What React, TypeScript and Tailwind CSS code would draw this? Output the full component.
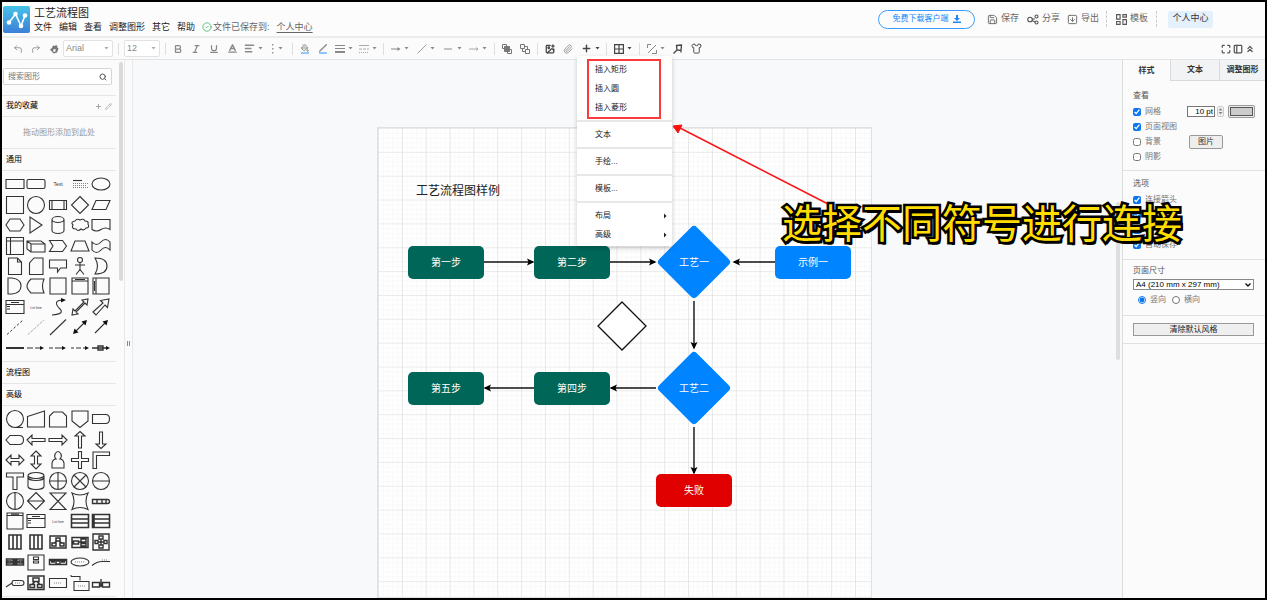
import { useState } from "react";
import type { ReactNode } from "react";
import { clsx } from "clsx";
import {
  AlignLeft,
  ArrowRight,
  Baseline,
  Bold,
  ChevronsUp,
  CircleCheck,
  CornerUpLeft,
  CornerUpRight,
  Grid2x2,
  ImagePlus,
  Italic,
  Maximize,
  Minus,
  PaintBucket,
  PanelLeft,
  Paperclip,
  Pencil,
  Plus,
  Save,
  Search,
  Shirt,
  Slash,
  SquareArrowDown,
  Underline,
} from "lucide-react";

type Shape = { d?: string; solid?: string; dash?: string; text?: string; width?: number };

const generalShapes: Shape[] = [
  { d: "M1 5.5h18v9H1z" },
  { d: "M2.5 5.5h15q1.5 0 1.5 1.5v6q0 1.5-1.5 1.5h-15Q1 14.5 1 13V7q0-1.5 1.5-1.5z" },
  { text: "Text" },
  { d: "M3 6.5h9", dash: "M3 9.5h15M3 11.5h14M3 13.5h15" },
  { d: "M1 10a9 6 0 1 0 18 0a9 6 0 1 0-18 0" },

  { d: "M1.5 1.5h17v17h-17z" },
  { d: "M1.5 10a8.5 8.5 0 1 0 17 0a8.5 8.5 0 1 0-17 0" },
  { d: "M1.5 5.5h17v9h-17zM4 5.5v9M16 5.5v9" },
  { d: "M10 1.5L18.5 10L10 18.5L1.5 10z" },
  { d: "M5 5.5h14l-4 9H1z" },

  { d: "M5 4h10l4 6-4 6H5l-4-6z" },
  { d: "M4 2v16l12-8z" },
  { d: "M4 4.5v11a6 3 0 0 0 12 0v-11a6 3 0 0 0-12 0a6 3 0 0 0 12 0" },
  { d: "M5 6Q7 3 10 5Q14 3 15 6Q19 6 18 9Q20 13 16 13Q14 16 11 14Q8 17 6 14Q1 14 3 10Q0 7 5 6z" },
  { d: "M1 4.5h18v10q-4.5-3-9 0t-9 0z" },

  { d: "M1.5 1.5h17v17h-17zM1.5 5h17M5.5 1.5v17" },
  { d: "M1 5h14l4 3v8H5l-4-3zM1 5l4 3h14M5 8v8" },
  { d: "M1.5 4.5h13l4 5.5-4 5.5h-13l3.5-5.5z" },
  { d: "M5 5h10l4 10H1z" },
  { d: "M1 6q4.5 5 9 0t9 0v8q-4.5-5-9 0t-9 0z" },

  { d: "M3.5 2h9l4 4v12.5h-13zM12.5 2v4h4" },
  { d: "M8 2h9v16.5H3.5V7z" },
  { d: "M1.5 4h17v8h-6l-3 4v-4h-8z" },
  { d: "M7.5 4a2.5 2.5 0 1 0 5 0a2.5 2.5 0 1 0-5 0M10 6.5v7M5 9h10M10 13.5l-4 5M10 13.5l4 5" },
  { d: "M4 2q12 0 12 8t-12 8q5-8 0-16z" },

  { d: "M3 2h4q9 1 9 8t-9 8H3z" },
  { d: "M5 3h13q-3 7 0 14H5Q1 13 1 10t4-7z" },
  { d: "M2 2h16v16H2z" },
  { d: "M2 2h16v16H2zM2 5h16M5 3.5h10" },
  { d: "M2 2h16v16H2zM5 2v16M3.5 5v10" },

  { d: "M1 3.5h18v13H1zM1 7.5h18M2 9.5h3M2 12h3M6 5.5h8" },
  { text: "List Item" },
  { d: "M4 18q14-1 7-7q-7-8 5-8", solid: "M13 1l5 2-5 2.5z" },
  { d: "M2 18l1-6 2 2L14 5l-2-2 6-1-1 6-2-2-9 9 2 2z" },
  { d: "M2 15L12 6l-2.5-2.5L18 2l-1.5 8.5L14 8 5 18z" },

  { dash: "M2 17.5L18 3", width: 1 },
  { dash: "M2 17.5L18 3" },
  { d: "M2 18L18 2.5" },
  { d: "M5 15L15 5", solid: "M3 17l1.5-5.5 4 4zM17 3l-1.5 5.5-4-4z" },
  { d: "M4 16L15 5", solid: "M17 3l-1.5 5.5-4-4z" },

  { d: "M1 10h18", width: 2 },
  { d: "M1 10h6M9 10h5", solid: "M14 8l4 2-4 2z" },
  { d: "M1 10h4M7 10h7", solid: "M14 8l4 2-4 2z" },
  { d: "M1 10h3M6 10h5M13 10h3", solid: "M15 8l4 2-4 2z" },
  { d: "M1 10h15M7 8h5v4H7z", solid: "M15 8l4 2-4 2z", width: 1.4 },
];

const advancedShapes: Shape[] = [
  { d: "M1.5 10a8.5 8.5 0 1 0 17 0a8.5 8.5 0 1 0-17 0M10 18.5h8" },
  { d: "M1.5 7.5l17-5.5v16h-17z" },
  { d: "M5.5 3h9l4 4v11h-17V7z" },
  { d: "M2 2h16v10l-8 6.5L2 12z" },
  { d: "M1.5 5.5h13q4 0 4 4.5t-4 4.5h-13z" },

  { d: "M5 5.5h9q4.5 0 4.5 4.5T14 14.5H5L1 10z" },
  { d: "M1 10l5-5v3.5h13v3H6V15z" },
  { d: "M19 10l-5-5v3.5H1v3h13V15z" },
  { d: "M10 1.5l5 4.5h-3.5v12h-3V6H5z" },
  { d: "M10 18.5L5 14h3.5V2h3v12H15z" },

  { d: "M1 10l5-5v3.5h8V5l5 5-5 5v-3.5H6V15z" },
  { d: "M10 1l5 5h-3.5v8H15l-5 5-5-5h3.5V6H5z" },
  { d: "M8 9q-2-2-1-5q3-5 6 0q1 3-1 5q3 0 4 4v5H4v-5q1-4 4-4z" },
  { d: "M8.5 1.5h3v7h7v3h-7v7h-3v-7h-7v-3h7z" },
  { d: "M2 2h16.5v3.5h-13v13H2z" },

  { d: "M1.5 2h17v4h-6.5v12.5H8V6H1.5z" },
  { d: "M2 4.5v11a8 3 0 0 0 16 0v-11a8 3 0 0 0-16 0a8 3 0 0 0 16 0M2 6.5a8 3 0 0 0 16 0" },
  { d: "M1.5 10a8.5 8.5 0 1 0 17 0a8.5 8.5 0 1 0-17 0M10 1.5v17M1.5 10h17" },
  { d: "M1.5 10a8.5 8.5 0 1 0 17 0a8.5 8.5 0 1 0-17 0M4 4l12 12M16 4L4 16" },
  { d: "M1.5 10a8.5 8.5 0 1 0 17 0a8.5 8.5 0 1 0-17 0M1.5 10h17" },

  { d: "M1.5 10a8.5 8.5 0 1 0 17 0a8.5 8.5 0 1 0-17 0M10 1.5v17" },
  { d: "M10 1.5L18.5 10L10 18.5L1.5 10zM1.5 10h17" },
  { d: "M2 2h16L2 18.5h16z" },
  { d: "M2 2q8 4 16 0q-4 8 0 16.5q-8-4-16 0q4-8 0-16.5z" },
  { d: "M1.5 8.5h15q2 0 2 2t-2 2h-15zM6 8.5v4M11 8.5v4M15 8.5v4", width: 1.4 },

  { d: "M2 2h16v16H2zM2 4.5h16M6 3.2h8" },
  { d: "M1 3.5h18v13H1zM1 7.5h18M2 9.5h3M2 12h3M6 5.5h8" },
  { text: "List Item" },
  { d: "M1.5 3.5h17v13h-17zM1.5 8h17M1.5 12h17", width: 1.6 },
  { d: "M1.5 3.5h17v13h-17zM1.5 8h17M1.5 12h17M3 3.5v13", width: 1.6 },

  { d: "M4 3h12v14H4zM8 3v14M12 3v14", width: 1.6 },
  { d: "M4 3h12v14H4zM8 3v14M12 3v14", width: 1.6 },
  { d: "M2 4h16v12H2zM8 6h4v3H8zM4 11h4v3H4zM12 11h4v3h-4zM6 11l3-2M14 11l-3-2", width: 1.5 },
  { d: "M2 5.5h16v10H2zM3.5 9h5v3h-5zM11 7h5v3h-5zM11 11.5h5v2.5h-5zM8 10h3", width: 1.5 },
  { d: "M2 2h16v16H2zM8 4h4v3H8zM8 13h4v3H8zM4 8.5h3v3H4zM13 8.5h3v3h-3zM10 7v6M7 10h6", width: 1.4 },

  { d: "M1.5 7h17v6h-17zM3 9h3v2H3zM8 8.5h4v3H8zM14 9h3v2h-3zM6 10h8", width: 1.5 },
  { d: "M2 3h16v15H2zM7.5 5h5v2.5h-5zM7.5 9h5v2h-5zM6 3h8" },
  { d: "M1.5 7.5h17v5h-17zM3 10h4M8 9h4v3H8zM13 10h4M2 8.5h16", width: 1.5 },
  { d: "M1 10a9 4 0 1 0 18 0a9 4 0 1 0-18 0", dash: "M5 10h10" },
  { d: "M1 13.5q5-4 10-4h8", dash: "M11 8h6" },

  { d: "M1 14l6-4M9 7.5h7q3 0 3 2.5t-3 2.5H9q-2 0-2-2.5t2-2.5z", dash: "M10 10h6" },
  { d: "M2 3h16v13.5H2zM7 5h6v3.5H7zM4 11.5h4.5v3H4zM11.5 11.5H16v3h-4.5zM6 11.5l3-3M14 11.5l-3-3", width: 1.5 },
  { d: "M1.5 5.5h17v9h-17z", dash: "M6 10h8" },
  { d: "M1 3.5h9v4M4 8.5h15v9H4zM1 2v1.5", dash: "M8 13h7" },
  { d: "M1.5 9.5h7v4.5h-7zM11.5 9.5h7v4.5h-7zM10 6v8M8.5 12h3", width: 1.4 },
];

function ShapeIcon({ shape }: { shape: Shape }) {
  return (
    <svg viewBox="0 0 20 20" className="size-5" fill="none" stroke="#333" strokeWidth={shape.width ?? 1.1}>
      {shape.d && <path d={shape.d} />}
      {shape.dash && <path d={shape.dash} strokeDasharray={shape.width ? "2.5 2" : "1 1"} strokeWidth={shape.width ?? 0.6} />}
      {shape.solid && <path d={shape.solid} fill="#111" stroke="none" />}
      {shape.text && (
        <text x="10" y="11.5" fontSize={shape.text === "Text" ? 5 : 3} fill="#333" stroke="none" textAnchor="middle">
          {shape.text}
        </text>
      )}
    </svg>
  );
}

function ShapePalette({ shapes }: { shapes: Shape[] }) {
  return (
    <div className="w-[114px] shrink-0 border-b border-[#e6e6e6]">
      <div className="grid h-[190px] w-[110px] grid-cols-5 grid-rows-9 py-[3px] pl-[2px]">
        {shapes.map((shape, i) => (
          <button key={i} type="button" aria-label={`图形 ${i + 1}`} className="flex min-h-0 items-center justify-center">
            <ShapeIcon shape={shape} />
          </button>
        ))}
      </div>
    </div>
  );
}

function SectionTitle({ children, actions }: { children: ReactNode; actions?: ReactNode }) {
  return (
    <div className={clsx("flex w-[114px] shrink-0 items-center justify-between border-b border-[#e6e6e6] px-1", actions ? "h-[21px]" : "h-[22px]")}>
      <button type="button" className="text-[8px] text-black">{children}</button>
      {actions}
    </div>
  );
}

function Sidebar() {
  return (
    <aside className="flex w-[122px] shrink-0 justify-between overflow-hidden bg-[#fbfbfb]">
      <div className="flex flex-col">
        <div className="w-[114px] shrink-0 border-b border-[#e6e6e6] pb-[10px] pt-2 pl-px">
          <label className="flex h-[17px] w-[109px] items-center justify-between rounded-xs border border-[#d5d5d5] bg-white px-1">
            <input type="text" aria-label="搜索图形" placeholder="搜索图形" className="w-20 text-[8px] outline-none placeholder:text-[#777]" />
            <Search size={8} strokeWidth={3} className="text-[#555]" />
          </label>
        </div>
        <SectionTitle
          actions={
            <span className="flex gap-[3px] text-[#999]">
              <Plus size={7} strokeWidth={3} />
              <Pencil size={7} strokeWidth={2} />
            </span>
          }
        >
          我的收藏
        </SectionTitle>
        <p className="flex h-8 w-[114px] shrink-0 items-center justify-center border-b border-[#e6e6e6] text-[8px] text-[#999]">拖动图形添加到此处</p>
        <SectionTitle>通用</SectionTitle>
        <ShapePalette shapes={generalShapes} />
        <SectionTitle>流程图</SectionTitle>
        <SectionTitle>高级</SectionTitle>
        <ShapePalette shapes={advancedShapes} />
      </div>
      <div className="mr-px mt-[2px] h-[219px] w-1 rounded-full bg-[#dadada]" />
    </aside>
  );
}

function HeaderAction({ icon, children }: { icon: ReactNode; children: ReactNode }) {
  return (
    <button type="button" className="flex w-8 items-center gap-[3px] whitespace-nowrap text-[9px] text-[#666]">
      {icon}
      {children}
    </button>
  );
}

function Header() {
  return (
    <header className="flex h-9 shrink-0 items-center justify-between border-b-2 border-[#ececec] bg-[#fcfcfc]">
      <div className="flex items-center pl-px">
        <svg viewBox="0 0 27 27" className="size-[27px]">
          <defs>
            <linearGradient id="logo" x1="0" y1="0" x2="0" y2="1">
              <stop offset="0" stopColor="#46c3e8" />
              <stop offset="1" stopColor="#3c7fd8" />
            </linearGradient>
          </defs>
          <rect width="27" height="27" rx="2" fill="url(#logo)" />
          <path d="M6 16.5L12.5 8l5.5 12L22 9.5" fill="none" stroke="#fff" strokeWidth="1.6" />
          <g fill="#fff">
            <circle cx="6" cy="16.5" r="2.3" />
            <circle cx="12.5" cy="8" r="2.3" />
            <circle cx="18" cy="20" r="2.3" />
            <circle cx="22" cy="9.5" r="2.3" />
          </g>
        </svg>
        <div className="ml-1 pt-px">
          <h1 className="text-[11px] leading-[14px] text-[#222]">工艺流程图</h1>
          <nav className="flex items-center gap-[7px] text-[9px] leading-[14px] text-[#222]">
            {["文件", "编辑", "查看", "调整图形", "其它", "帮助"].map((name) => (
              <button key={name} type="button">{name}</button>
            ))}
            <span className="flex items-center gap-px text-[#666]">
              <CircleCheck size={10} strokeWidth={2} className="text-[#46b871]" />
              文件已保存到:
            </span>
            <a href="#profile" className="text-[#666] underline underline-offset-2">个人中心</a>
          </nav>
        </div>
      </div>
      <div className="mr-[52px] flex items-center">
        <button type="button" className="mr-3 flex h-[19px] w-[97px] items-center justify-center gap-1 rounded-full border border-[#3b9cff] text-[8px] text-[#1787fb]">
          免费下载客户端
          <svg viewBox="0 0 8 8" className="size-2" fill="#1787fb">
            <path d="M3 0h2v3h2L4 6 1 3h2zM0 6.5h8V8H0z" />
          </svg>
        </button>
        <div className="flex gap-2">
          <HeaderAction icon={<Save size={11} />}>保存</HeaderAction>
          <HeaderAction
            icon={
              <svg viewBox="0 0 12 11" className="h-[11px] w-3 shrink-0" fill="none" stroke="#555" strokeWidth="1.1">
                <circle cx="3" cy="5.5" r="2.3" />
                <circle cx="9.5" cy="2.5" r="1.5" />
                <circle cx="9.5" cy="8.5" r="1.5" />
                <path d="M5 5h3M8 8L5 6.5" />
              </svg>
            }
          >
            分享
          </HeaderAction>
          <HeaderAction icon={<SquareArrowDown size={11} />}>导出</HeaderAction>
        </div>
        <div className="ml-[7px] mr-[9px] h-4 border-l border-dashed border-[#ccc]" />
        <HeaderAction
          icon={
            <svg viewBox="0 0 11 11" className="size-[11px] shrink-0" fill="none" stroke="#555" strokeWidth="1.1">
              <path d="M.6.6h3.5v4.5H.6zM6.9.6h3.5v2.5H6.9zM.6 7.5h3.5v2.9H.6zM6.9 5.6h3.5v4.8H6.9z" />
            </svg>
          }
        >
          模板
        </HeaderAction>
        <div className="ml-2 mr-[11px] h-4 border-l border-dashed border-[#ccc]" />
        <button type="button" className="h-[17px] w-[45px] rounded-xs bg-[#e5f0fd] text-[9px] text-[#333]">个人中心</button>
      </div>
    </header>
  );
}

function Caret() {
  return (
    <svg viewBox="0 0 5 3" className="h-[3px] w-[5px] shrink-0" fill="currentColor">
      <path d="M.5 0h4L2.5 2.5z" />
    </svg>
  );
}

function Tool({ label, dark, children }: { label: string; dark?: boolean; children: ReactNode }) {
  return (
    <button type="button" aria-label={label} className={clsx("flex h-full w-[18px] shrink-0 items-center justify-center", dark ? "text-[#444]" : "text-[#8a8a8a]")}>
      {children}
    </button>
  );
}

function DropTool({ label, wide, dark, children }: { label: string; wide?: boolean; dark?: boolean; children: ReactNode }) {
  return (
    <button
      type="button"
      aria-label={label}
      className={clsx("flex h-full shrink-0 items-center justify-center gap-[3px]", wide ? "w-[26px]" : "w-6", dark ? "text-[#444]" : "text-[#8a8a8a]")}
    >
      {children}
      <Caret />
    </button>
  );
}

function Divider() {
  return <div className="mx-[3px] h-3 w-px shrink-0 bg-[#dedede]" />;
}

function ToolSelect({ label, options, className }: { label: string; options: string[]; className: string }) {
  return (
    <div className={clsx("relative flex h-[17px] items-center rounded-xs border border-[#e2e2e2] bg-white text-[#aaa]", className)}>
      <select aria-label={label} className="h-full w-full appearance-none bg-transparent pl-[2px] text-[9px] text-[#888] outline-none">
        {options.map((o) => (
          <option key={o}>{o}</option>
        ))}
      </select>
      <div className="pointer-events-none absolute right-[3px]">
        <Caret />
      </div>
    </div>
  );
}

function MenuItem({ children, sub }: { children: ReactNode; sub?: boolean }) {
  return (
    <button type="button" role="menuitem" className="flex h-[19px] w-full items-center justify-between pl-[18px] pr-[5px] text-[8px] text-[#222] hover:bg-[#eee]">
      {children}
      {sub && (
        <svg viewBox="0 0 3 6" className="h-[6px] w-[3px]" fill="#222">
          <path d="M0 .5L2.5 3 0 5.5z" />
        </svg>
      )}
    </button>
  );
}

function InsertMenu() {
  const rule = <div className="my-[3px] h-[2px] bg-[#e8e8e8]" />;
  return (
    <div role="menu" className="absolute left-0 top-[18px] z-20 w-[95px] rounded-xs bg-white pb-[2px] pt-1 shadow-[0_2px_5px_rgba(0,0,0,0.2)]">
      <MenuItem>插入矩形</MenuItem>
      <MenuItem>插入圆</MenuItem>
      <MenuItem>插入菱形</MenuItem>
      {rule}
      <MenuItem>文本</MenuItem>
      {rule}
      <MenuItem>手绘...</MenuItem>
      {rule}
      <MenuItem>模板...</MenuItem>
      {rule}
      <MenuItem sub>布局</MenuItem>
      <MenuItem sub>高级</MenuItem>
      {/* highlight round the insert entries */}
      <div className="pointer-events-none absolute left-[10px] top-[3px] h-[60px] w-[74px] border-2 border-[#fb3a3a]" />
    </div>
  );
}

function Toolbar() {
  return (
    <div className="flex h-[22px] shrink-0 items-center justify-between border-b border-[#e4e4e4] bg-[#fbfbfb]">
      <div className="flex h-full items-center pl-[7px]">
        <Tool label="撤销"><CornerUpLeft size={10} /></Tool>
        <Tool label="重做"><CornerUpRight size={10} /></Tool>
        <Tool label="格式刷">
          <svg viewBox="0 0 10 10" className="size-[10px]" fill="#777">
            <path d="M1 5.5L3 4l1-2.5 2 .5 1-1 1.5 1-.5 1 1.500 1.500L8 8.500 4.500 9.500z" />
            <path d="M4.500 5l2.500.500-1 2.500-2-.500z" fill="#fbfbfb" />
          </svg>
        </Tool>
        <ToolSelect label="字体" options={["Arial", "Helvetica", "Verdana"]} className="mr-[2px] w-[50px]" />
        <Divider />
        <ToolSelect label="字号" options={["12", "14", "18"]} className="mx-[2px] w-9" />
        <Divider />
        <Tool label="粗体"><Bold size={10} strokeWidth={3} /></Tool>
        <Tool label="斜体"><Italic size={10} strokeWidth={3} /></Tool>
        <Tool label="下划线"><Underline size={10} strokeWidth={3} /></Tool>
        <Tool label="字体颜色"><Baseline size={11} strokeWidth={3} /></Tool>
        <DropTool label="对齐"><AlignLeft size={11} strokeWidth={3} /></DropTool>
        <DropTool label="间距">
          <svg viewBox="0 0 4 10" className="h-[10px] w-1" fill="#999">
            <path d="M1 0h1.5v1.5H1zM1 4h1.5v1.5H1zM1 8h1.5v1.5H1z" />
          </svg>
        </DropTool>
        <Divider />
        <Tool label="填充颜色">
          <span className="border-b-2 border-[#8ec8ff]"><PaintBucket size={8} strokeWidth={3} /></span>
        </Tool>
        <Tool label="线条颜色">
          <span className="border-b-2 border-[#8ec8ff]"><Slash size={8} strokeWidth={4} /></span>
        </Tool>
        <DropTool label="线宽">
          <svg viewBox="0 0 10 8" className="h-2 w-[10px]" stroke="#888">
            <path d="M0 .5h10" />
            <path d="M0 3.500h10" />
            <path d="M0 7h10" strokeWidth="2" />
          </svg>
        </DropTool>
        <DropTool label="线型">
          <svg viewBox="0 0 10 8" className="h-2 w-[10px]" stroke="#aaa">
            <path d="M0 .5h10" />
            <path d="M0 4h10" strokeDasharray="3 1" />
            <path d="M0 7.5h10" strokeDasharray="1 1" />
          </svg>
        </DropTool>
        <Divider />
        <DropTool label="连接" wide>
          <svg viewBox="0 0 10 6" className="h-[6px] w-[10px]" fill="#888" stroke="#888">
            <path d="M0 3h7" />
            <path d="M6.500 1L9.500 3l-3 2z" stroke="none" />
          </svg>
        </DropTool>
        <DropTool label="路径" wide><Slash size={10} /></DropTool>
        <DropTool label="起点" wide><Minus size={12} /></DropTool>
        <DropTool label="终点" wide>
          <svg viewBox="0 0 10 6" className="h-[6px] w-[10px]" fill="none" stroke="#aaa">
            <path d="M0 3h9M7 1.5L9 3 7 4.5" />
          </svg>
        </DropTool>
        <Divider />
        <Tool label="移至最前">
          <svg viewBox="0 0 10 10" className="size-[10px]" stroke="#777" fill="none">
            <path d="M.5.5h4v4h-4zM5.5 5.5h4v4h-4z" />
            <path d="M2.5 2.5h5v5h-5z" fill="#777" />
          </svg>
        </Tool>
        <Tool label="移至最后">
          <svg viewBox="0 0 10 10" className="size-[10px]" stroke="#777" fill="none">
            <path d="M2.5 2.5h5v5h-5z" />
            <path d="M.5.5h4v4h-4zM5.5 5.5h4v4h-4z" fill="#fbfbfb" />
          </svg>
        </Tool>
        <Divider />
        <Tool label="图片" dark><ImagePlus size={10} strokeWidth={3} /></Tool>
        <Tool label="附件"><Paperclip size={10} /></Tool>
        <div className="relative h-full">
          <DropTool label="插入" wide dark><Plus size={11} strokeWidth={3} /></DropTool>
          <InsertMenu />
        </div>
        <Divider />
        <DropTool label="表格" wide dark>
          <svg viewBox="0 0 10 10" className="size-[10px]" fill="none" stroke="#444" strokeWidth="1.2">
            <path d="M.6.6h8.8v8.800H.6zM5 .6v8.800M.6 5h8.800" />
          </svg>
        </DropTool>
        <Divider />
        <DropTool label="航点" wide>
          <svg viewBox="0 0 10 10" className="size-[10px]" fill="none" stroke="#888">
            <path d="M.5 4V.5H4M1 9L9 1M5 9.5h4.500V6" />
          </svg>
        </DropTool>
        <Tool label="查找" dark>
          <svg viewBox="0 0 10 10" className="size-[10px]" fill="none" stroke="#444" strokeWidth="1.3">
            <path d="M3.5 1.500L8.500 1 8 6.500 4 6zM4 6L.5 9.500M8 6.500v2" />
          </svg>
        </Tool>
        <Tool label="主题" dark><Shirt size={11} strokeWidth={2} /></Tool>
      </div>
      <div className="mr-2 flex h-full text-[#555]">
        <button type="button" aria-label="全屏" className="w-3"><Maximize size={10} strokeWidth={3} /></button>
        <button type="button" aria-label="格式面板" className="w-3"><PanelLeft size={10} strokeWidth={3} /></button>
        <button type="button" aria-label="收起" className="w-3"><ChevronsUp size={10} strokeWidth={3} /></button>
      </div>
    </div>
  );
}

const nodes = [
  { label: "第一步", x: 30, y: 118, color: "bg-[#006658]" },
  { label: "第二步", x: 156, y: 118, color: "bg-[#006658]" },
  { label: "示例一", x: 397, y: 118, color: "bg-[#0084ff]" },
  { label: "第五步", x: 30, y: 244, color: "bg-[#006658]" },
  { label: "第四步", x: 156, y: 244, color: "bg-[#006658]" },
  { label: "失败", x: 278, y: 346, color: "bg-[#e10000]" },
  { label: "工艺一", x: 278, y: 118, color: "" },
  { label: "工艺二", x: 278, y: 244, color: "" },
];

const edges = [
  "M106 134H155",
  "M232 134H277",
  "M397 134H356",
  "M316 173V220",
  "M278 260H233",
  "M156 260H107",
  "M316 299V345",
];

function Paper() {
  return (
    <div className="relative mt-[67px] w-[495px] shrink-0 border border-[#dfe1e3] bg-white">
      <svg className="absolute inset-0 size-full">
        <defs>
          <pattern id="minor" width="4.77" height="4.77" patternUnits="userSpaceOnUse">
            <path d="M4.77 0H0V4.77" fill="none" stroke="#f3f3f3" />
          </pattern>
          <pattern id="major" width="23.85" height="23.85" patternUnits="userSpaceOnUse">
            <rect width="24" height="24" fill="url(#minor)" />
            <path d="M23.85 0H0V23.85" fill="none" stroke="#dcdcdc" strokeWidth="1.2" />
          </pattern>
          <marker id="head" markerWidth="8" markerHeight="8" refX="6" refY="4" orient="auto" markerUnits="userSpaceOnUse">
            <path d="M0 .5L7.5 4 0 7.5 1.5 4z" />
          </marker>
        </defs>
        <rect width="100%" height="100%" fill="url(#major)" />
        {edges.map((d) => (
          <path key={d} d={d} fill="none" stroke="#111" strokeWidth="1.4" markerEnd="url(#head)" />
        ))}
        <g fill="#0084ff" stroke="#0084ff" strokeWidth="8" strokeLinejoin="round">
          <path d="M316 102l32 32-32 32-32-32z" />
          <path d="M316 228l32 32-32 32-32-32z" />
        </g>
        <path d="M244 174l24 24-24 24-24-24z" fill="#fff" stroke="#111" strokeWidth="1.3" />
      </svg>
      <h2 className="absolute left-[38px] top-[54px] text-[12px] leading-[18px] text-[#222]">工艺流程图样例</h2>
      {nodes.map((n) => (
        <div
          key={n.label}
          className={clsx("absolute flex h-[33px] w-[76px] items-center justify-center rounded-[5px] text-[10px] text-white", n.color)}
          style={{ left: n.x, top: n.y }}
        >
          {n.label}
        </div>
      ))}
    </div>
  );
}

function CheckBox({ name, checked }: { name?: string; checked?: boolean }) {
  return <input type="checkbox" aria-label={name} defaultChecked={checked} className="size-2 shrink-0 accent-[#0b76ef]" />;
}

function CheckRow({ label, checked, children }: { label: string; checked?: boolean; children?: ReactNode }) {
  return (
    <div className="flex h-[15px] items-center">
      <label className="flex w-14 items-center gap-1 whitespace-nowrap text-[8px] text-[#777]">
        <CheckBox checked={checked} />
        {label}
      </label>
      {children}
    </div>
  );
}

function PanelTitle({ children }: { children: ReactNode }) {
  return <h3 className="flex h-[17px] items-center text-[8px] text-[#555]">{children}</h3>;
}

function FormatPanel() {
  const [tab, setTab] = useState("样式");

  return (
    <aside className="w-[143px] shrink-0 border-l border-[#dcdcdc] bg-[#fbfbfb]">
      <div role="tablist" className="grid h-[21px] grid-cols-[47px_49px_46px]">
        {["样式", "文本", "调整图形"].map((name) => (
          <button
            key={name}
            type="button"
            role="tab"
            aria-selected={tab === name}
            onClick={() => setTab(name)}
            className={clsx(
              "whitespace-nowrap text-[8px] font-bold text-[#333]",
              tab === name ? "bg-[#fbfbfb]" : "border-b border-l border-[#d8dadc] bg-[#f1f3f4]"
            )}
          >
            {name}
          </button>
        ))}
      </div>

      <section className="border-b border-[#e0e0e0] px-[10px] py-[6px]">
        <PanelTitle>查看</PanelTitle>
        <CheckRow label="网格" checked>
          <input type="text" aria-label="网格大小" defaultValue="10 pt" className="h-[11px] w-7 border border-[#777] bg-white pr-px text-right text-[8px] text-black" />
          <div className="ml-[2px] flex h-[11px] w-[7px] flex-col items-center justify-around rounded-xs border border-[#ccc] bg-[#f3f3f3] text-[#888]">
            <svg viewBox="0 0 5 3" className="h-[3px] w-[5px]" fill="currentColor">
              <path d="M.5 2.5h4L2.5 0z" />
            </svg>
            <Caret />
          </div>
          <button type="button" aria-label="网格颜色" className="ml-1 h-[13px] w-[27px] shrink-0 rounded-xs border border-[#999] bg-[#eee] p-px">
            <span className="block h-full border border-[#555] bg-[#ccc]" />
          </button>
        </CheckRow>
        <CheckRow label="页面视图" checked />
        <CheckRow label="背景">
          <button type="button" className="h-[14px] w-[34px] rounded-xs border border-[#999] bg-[#eee] text-[8px] leading-none text-[#333]">图片</button>
        </CheckRow>
        <CheckRow label="阴影" />
      </section>

      <section className="border-b border-[#e0e0e0] px-[10px] pb-[7px] pt-1">
        <PanelTitle>选项</PanelTitle>
        <CheckRow label="连接箭头" checked />
        <div className="flex h-[15px] items-center">
          <CheckBox name="连接点" checked />
        </div>
        <div className="flex h-[15px] items-center">
          <CheckBox name="参考线" checked />
        </div>
        <CheckRow label="自动保存" checked />
      </section>

      <section className="border-b border-[#e0e0e0] px-[10px] pb-2 pt-[2px]">
        <PanelTitle>页面尺寸</PanelTitle>
        <div className="relative flex w-[121px] items-center">
          <select aria-label="页面尺寸" className="h-[11px] w-full appearance-none border border-[#888] bg-white pl-[2px] text-[8px] leading-none text-black">
            <option>A4 (210 mm x 297 mm)</option>
            <option>A3 (297 mm x 420 mm)</option>
          </select>
          <svg viewBox="0 0 6 4" className="pointer-events-none absolute right-[3px] h-1 w-[6px]" fill="none" stroke="#111" strokeWidth="1.4">
            <path d="M.5.5L3 3 5.5.5" />
          </svg>
        </div>
        <div className="mt-[2px] flex h-[15px] items-center gap-[6px] pl-[5px] text-[8px] text-[#777]">
          <label className="flex items-center gap-1">
            <input type="radio" name="orientation" defaultChecked className="size-2 accent-[#0b76ef]" />
            竖向
          </label>
          <label className="flex items-center gap-1">
            <input type="radio" name="orientation" className="size-2 accent-[#0b76ef]" />
            横向
          </label>
        </div>
      </section>

      <section className="flex border-b border-[#e0e0e0] px-[10px] py-[7px]">
        <button type="button" className="h-[13px] w-[121px] border border-[#999] bg-[#efefef] text-[8px] leading-none text-[#222]">清除默认风格</button>
      </section>
    </aside>
  );
}

export default function App() {
  return (
    <div className="relative flex h-screen flex-col overflow-hidden border-2 border-black bg-[#fbfbfb] font-['Liberation_Sans','Noto_Sans_CJK_SC',sans-serif]">
      <Header />
      <Toolbar />
      <div className="flex min-h-0 flex-1">
        <Sidebar />
        <div className="flex w-[9px] shrink-0 items-center justify-center border-x border-[#e6e8ea] bg-[#fbfbfb] pt-7">
          <div className="h-[5px] w-[3px] border-x border-[#888]" />
        </div>
        <main className="flex min-w-0 flex-1 overflow-hidden bg-[#f8f9fb]">
          <div className="flex flex-1 justify-center">
            <Paper />
          </div>
          <div className="w-[6px] shrink-0 pt-[142px]">
            <div className="h-[158px] w-1 rounded-full bg-[#dcdedf]" />
          </div>
        </main>
        <FormatPanel />
      </div>

      {/* annotation layer */}
      <svg className="pointer-events-none absolute left-[668px] top-[118px] z-30 h-[90px] w-[164px]" viewBox="0 0 164 90">
        <path d="M158 84L10 8" stroke="#fb1515" strokeWidth="1.5" />
        <path d="M3 6l9-1-4 8z" fill="#fb0f0f" stroke="#fb0f0f" />
      </svg>
      <p className="pointer-events-none absolute left-[780px] top-[198px] z-30 whitespace-nowrap text-[40px] leading-[48px] text-[#ffdd00] [-webkit-text-stroke:5px_#000] [paint-order:stroke_fill] [text-shadow:2px_3px_0_#000]">
        选择不同符号进行连接
      </p>
    </div>
  );
}
